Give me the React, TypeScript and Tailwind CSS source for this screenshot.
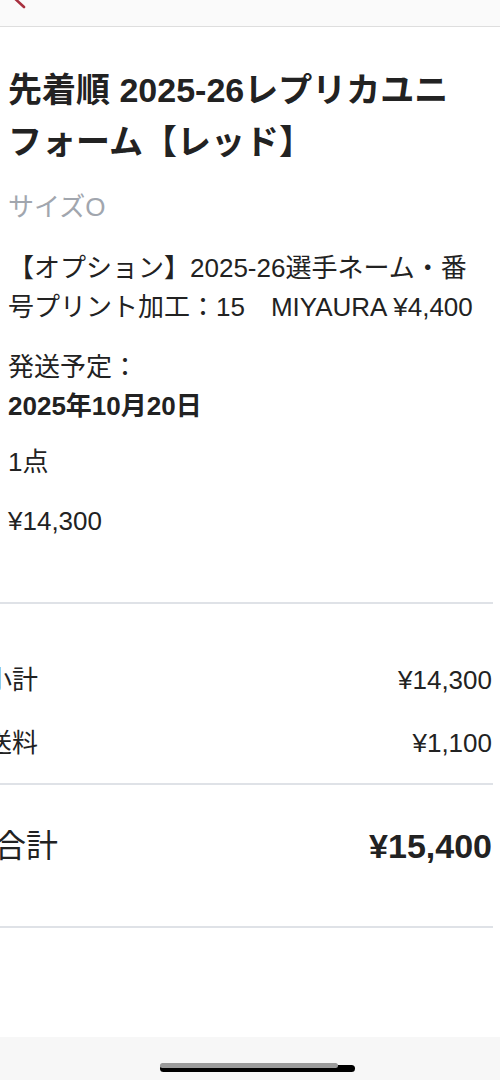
import React from 'react'

const font = { fontFamily: '"Liberation Sans", "Noto Sans CJK JP", sans-serif' }

function Divider() {
  return <div className="mr-[7px] h-[2px] bg-[#dfe2e7]" />
}

function SummaryRow({ label, value }: { label: string; value: string }) {
  return (
    <div className="flex items-center justify-between pr-[8px] text-[26px] leading-[39px] text-[#222]">
      <span className="-ml-[14px]">{label}</span>
      <span>{value}</span>
    </div>
  )
}

export default function App() {
  return (
    <div className="flex h-[1080px] w-[500px] flex-col overflow-hidden bg-white" style={font}>
      <header className="h-[27px] shrink-0 border-b border-[#dedede] bg-[#fafafa]">
        <svg width="40" height="26" viewBox="0 0 40 26" className="block">
          <path d="M24 7 L11 -5" stroke="#a8303f" strokeWidth="2.6" strokeLinecap="round" fill="none" />
        </svg>
      </header>

      <section className="px-2 pt-[37px] text-[#222]">
        <h1 className="text-[34px] font-bold leading-[52px]">
          先着順 2025-26レプリカユニ
          <br />
          フォーム【レッド】
        </h1>
        <p className="mt-[20px] text-[26px] leading-[39px] text-[#a1a6ae]">サイズO</p>
        <p className="mt-[22px] text-[26px] leading-[39px]">
          【オプション】2025-26選手ネーム・番
          <br />
          号プリント加工：15　MIYAURA ¥4,400
        </p>
        <p className="mt-[21px] text-[26px] leading-[39px]">発送予定：</p>
        <p className="text-[26px] font-bold leading-[39px]">2025年10月20日</p>
        <p className="mt-[17px] text-[26px] leading-[39px]">1点</p>
        <p className="mt-[20px] text-[26px] leading-[39px]">¥14,300</p>
      </section>

      <div className="mt-[61px]">
        <Divider />
        <div className="mt-[57px] flex flex-col gap-[24px]">
          <SummaryRow label="小計" value="¥14,300" />
          <SummaryRow label="送料" value="¥1,100" />
        </div>
        <div className="mt-[20px]">
          <Divider />
        </div>
        <div className="mt-[37px] flex items-center justify-between pr-[8px] leading-[48px] text-[#222]">
          <span className="-ml-[6px] text-[32px]">合計</span>
          <span className="text-[34px] font-bold">¥15,400</span>
        </div>
        <div className="mt-[56px]">
          <Divider />
        </div>
      </div>

      <footer className="mt-auto flex h-[43px] shrink-0 justify-center bg-[#f7f7f7] pl-[15px] pt-[26px]">
        <div className="relative h-[9px] w-[195px]">
          <div className="absolute inset-x-0 bottom-0 h-[7px] rounded-full bg-black" />
          <div className="absolute left-0 top-0 h-[5px] w-[178px] rounded-full bg-[#9b9b9b]" />
        </div>
      </footer>
    </div>
  )
}
